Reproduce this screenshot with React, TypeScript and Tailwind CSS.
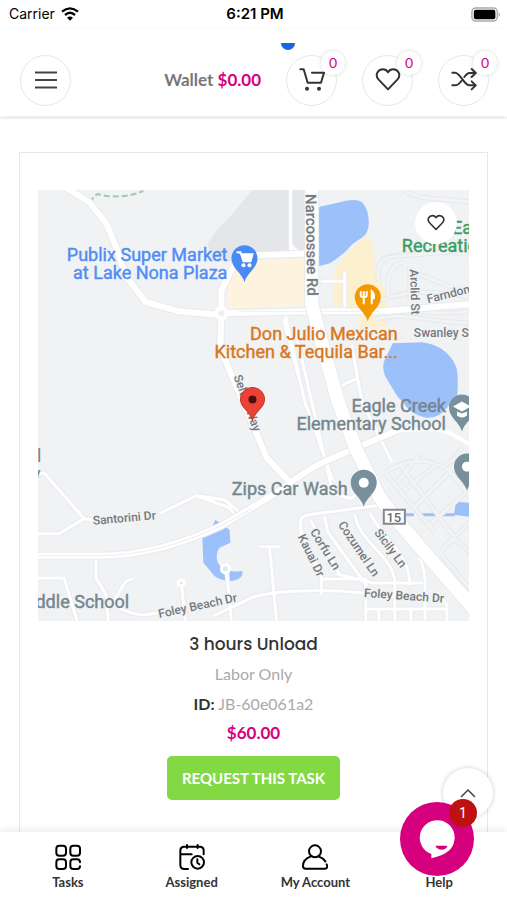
import type { ReactNode } from 'react'

const ACTIONS = [
  {
    nome: 'Cart',
    icon: (
      <>
        <path d="M4 7h10l12 40h40l9-30H39" />
        <circle cx="24" cy="65" r="3" fill="currentColor" />
        <circle cx="60" cy="65" r="3" fill="currentColor" />
      </>
    ),
  },
  {
    nome: 'Wishlist',
    icon: <path d="M39 67 11 38C-2 23 9 7 24 7c8 0 12 4 15 9 3-5 7-9 15-9 15 0 26 16 13 31Z" />,
  },
  {
    nome: 'Compare',
    icon: (
      <>
        <path d="M4 17h8c17 0 26 38 44 38h17M4 55h8c9 0 14-6 19-13M40 30c5-7 9-12 16-12h17" />
        <path d="m62 6 12 12-12 12M62 43l12 12-12 12" />
      </>
    ),
  },
]

const TABS = [
  {
    nome: 'Tasks',
    icon: (
      <>
        <rect x="4" y="5" width="29" height="30" rx="9" />
        <rect x="46" y="5" width="29" height="30" rx="9" />
        <rect x="4" y="46" width="29" height="29" rx="9" />
        <path d="M75 55c0-6-4-9-9-9H55c-6 0-9 4-9 9v11c0 6 4 9 9 9h11c5 0 9-3 9-8" />
      </>
    ),
  },
  {
    nome: 'Assigned',
    icon: (
      <>
        <path d="M27 75H16C8 75 4 71 4 63V20c0-8 4-12 12-12h46c8 0 12 4 12 12v11M24 3v9M56 3v9M5 31h33" />
        <circle cx="56" cy="55" r="19" />
        <path d="M55 46v10l6 5" />
      </>
    ),
  },
  {
    nome: 'My Account',
    icon: (
      <>
        <circle cx="39" cy="22" r="18" />
        <path d="M27 37C12 42 3 54 3 66c0 5 2 8 8 8h58c7 0 8-6 5-13M51 38c9 3 15 8 19 14" />
      </>
    ),
  },
  { nome: 'Help', icon: null },
]

const ROADS = [
  'M-2 343h23l25-15L6 282l-8 3M46 328l8 1M121 323l37-18 33 12 7 10M158 305l28 4 11 9 6 6',
  'M58 365v22l10 17 2 26M-2 387h28l9 30 4 13M95 388c-10 0-12 12-18 20-4 6 8 14 29 16l19-3',
  'M143 392l4 38M188 378l5 52M175 425l38-18c20-8 75-9 110-5l60 6',
  'M221 356h20M231 357l7 73M283 403v-16M283 388h44v42M298 383l36 9h50',
  'M262 352v-22q1-5 8-6l75-10M261 336l22 51M272 330l29 54M286 326l3 15 39 54M316 324c5 28 37 40 40 66v40M331 322c12 25 40 40 40 72M345 314c20 26 40 48 41 75v40',
  'M328 418h80M340 418v12M372 418v12M408 430v-16l-10-13',
  'M256 137l38 165 18 6 8-6M306 121v-40M282 91h26M245 129l16 61M313 155l10 56 30 60M291 200l28-12M246 121l20 90 28 78',
  'M252 0v66M259 62l-8-8',
]

const FAINT_ROADS = [
  'M346 282c22-15 42-15 65-2M362 275l56 75 14 12M346 282l50 60M365 300l34-27M375 317l36-36M358 292l24-29M388 336l38-33M411 281l20 25M403 358l27-26M402 363l29 35M402 363q3-10 14-14M403 277c14-8 16-14 20-20',
  'M330 115c30-14 60-17 100-8M344 130c34-17 54-2 86-9M375 82l50 20M342 70q24-12 88-6M364 0c20 12 38 7 66 12',
  'M340 91c-4-18 4-25 20-25l70-6M350 108c-3-20 2-34 14-36M371 110V75M336 129c30-8 45 2 94 4',
]

const MAIN_ROADS =
  'M-2 365h60c50 0 90-14 125-30l55-33q30-23 50-32l70-30M183 123l-1 34 9 23 27 63 10 24 22 23M28-2l23 14 17 21 10 24 10 30 20 25 33 9 42 4M183 123v-23l10-20 8-14 73-3M183 123l91-2h70l86-7'

const NARCOOSSEE = 'M273-2v115l6 24 20 73 19 50 23 47 20 26 74 85'

const LABELS = [
  { x: 189, y: 71, color: '#4f8df5', text: 'Publix Super Market' },
  { x: 189, y: 89, color: '#4f8df5', text: 'at Lake Nona Plaza' },
  { x: 359, y: 150, color: '#d8781c', text: 'Don Julio Mexican' },
  { x: 359, y: 168, color: '#d8781c', text: 'Kitchen & Tequila Bar...' },
  { x: 407, y: 221, color: '#74868e', text: 'Eagle Creek' },
  { x: 407, y: 239, color: '#74868e', text: 'Elementary School' },
  { x: 309, y: 304, color: '#74868e', text: 'Zips Car Wash' },
  { x: 91, y: 417, color: '#74868e', text: 'ddle School' },
]

const STREETS = [
  { x: 267, y: 4, angle: 89, size: 15, text: 'Narcoossee Rd' },
  { x: 371, y: 79, angle: 88, size: 12, text: 'Arclid St' },
  { x: 389, y: 113, angle: -14, size: 12, text: 'Farndon' },
  { x: 375, y: 147, angle: 0, size: 12, text: 'Swanley St' },
  { x: 55, y: 334, angle: -5, size: 12, text: 'Santorini Dr' },
  { x: 121, y: 427, angle: -12, size: 12, text: 'Foley Beach Dr' },
  { x: 325, y: 406, angle: 4, size: 12, text: 'Foley Beach Dr' },
  { x: 271, y: 341, angle: 58, size: 12, text: 'Corfu Ln' },
  { x: 259, y: 346, angle: 64, size: 12, text: 'Kauai Dr' },
  { x: 299, y: 334, angle: 56, size: 12, text: 'Cozumel Ln' },
  { x: 335, y: 342, angle: 53, size: 12, text: 'Sicily Ln' },
  { x: 195, y: 186, angle: 70, size: 12, text: 'Selten Way' },
]

function Icon({ children, className = 'size-[26px]', width = 6 }: { children: ReactNode; className?: string; width?: number }) {
  return (
    <svg viewBox="0 0 78 78" className={className} fill="none" stroke="currentColor" strokeWidth={width} strokeLinecap="round" strokeLinejoin="round" aria-hidden="true">
      {children}
    </svg>
  )
}

function Pin({ x, y, color, children }: { x: number; y: number; color: string; children?: ReactNode }) {
  return (
    <g transform={`translate(${x} ${y})`}>
      <path d="M0 0C-2-9-13-14-13-24a13 13 0 1 1 26 0C13-14 2-9 0 0Z" fill={color} />
      {children}
    </g>
  )
}

function TaskMap() {
  return (
    <svg viewBox="0 0 430 430" className="block aspect-square w-full" fontFamily="Roboto, sans-serif" role="img" aria-label="Map of the task location">
      <rect width="430" height="430" fill="#f0f2f4" />
      <path d="M214 0 191 27l-13 13-9 14 6 17h25l52-8h21V0Z" fill="#e4e6ea" />
      <path d="M266 68l-60 2-15 15-3 30 3 3 77-3Z" fill="#fef4dd" />
      <path d="M328 45l7 10 1 25 12 23v34h-27l-2-19-25-3 2-35 15-20Z" fill="#fdf0ce" />

      {/* Water */}
      <g fill="#9cc0f9">
        <path d="M280 17l18-4q20-6 26 0 6 7 6 20 0 10-7 15-8 4-15 12-8 8-17 13l-11 3Z" />
        <path d="M354 153l30-1q12 2 19 7 10 7 14 17 3 8 1 33l-8 6q-10 14-24 12-14-3-22-15l-6-7-12-20q-3-10 0-16Z" />
        <path d="M177 329l14 10 1 13-11 5q-4 6-2 14 5 12 25 9 1 9-13 10-10-1-15-5l-11-13-1-24q3-6 9-10Z" />
        <path d="M417 311l14 1v14l-16-2Z" />
        <path d="M367 324h8M380 324h36" stroke="#9cc0f9" strokeWidth="3" />
      </g>
      <path d="M51 12l8-8q24 6 46-3" fill="none" stroke="#9fc9b4" strokeWidth="2" strokeDasharray="6 3" />

      {/* Roads */}
      <g fill="none" strokeLinejoin="round">
        {FAINT_ROADS.map((d) => (
          <g key={d}>
            <path d={d} stroke="#e6e9eb" strokeWidth="5" />
            <path d={d} stroke="#f1f3f5" strokeWidth="3" />
          </g>
        ))}
        {ROADS.map((d) => (
          <path key={d} d={d} stroke="#e9ebee" strokeWidth="5" />
        ))}
        {ROADS.map((d) => (
          <path key={d} d={d} stroke="#fff" strokeWidth="3" />
        ))}
        <path d={MAIN_ROADS} stroke="#e8eaed" strokeWidth="8" />
        <path d={MAIN_ROADS} stroke="#fff" strokeWidth="6" />
        <path d="M358 240l38-2q18 4 36 17" stroke="#fff" strokeWidth="4" />
        <path d="M-2 365h60c50 0 90-14 125-30l30-17M200 121h140" stroke="#eceef0" strokeWidth="1" />
        <path d={NARCOOSSEE} stroke="#e8eaed" strokeWidth="15" />
        <path d={NARCOOSSEE} stroke="#fff" strokeWidth="13" />
        <circle cx="183" cy="123" r="5" fill="#eceef0" stroke="#fff" strokeWidth="4" />
        <circle cx="143" cy="392" r="3" fill="#e5e7ea" stroke="#fff" strokeWidth="3" />
        <circle cx="187" cy="378" r="4" fill="#e5e7ea" stroke="#fff" strokeWidth="3" />
      </g>

      {/* Labels */}
      <g fill="#75797c" stroke="#f0f2f4" strokeWidth="2" paintOrder="stroke" fontWeight="500">
        {STREETS.map((s) => (
          <text key={s.text + s.x} transform={`translate(${s.x} ${s.y}) rotate(${s.angle})`} fontSize={s.size}>
            {s.text}
          </text>
        ))}
      </g>
      <g strokeWidth="0.400">
        {LABELS.map((l) => (
          <text key={l.text} x={l.x} y={l.y} fontSize="18" fill={l.color} stroke={l.color} textAnchor="end">
            {l.text}
          </text>
        ))}
        <g fill="#3a9b63" stroke="#3a9b63" fontSize="18">
          <text x="413" y="44">Eagle</text>
          <text x="363" y="62">Recreation</text>
        </g>
        <g fill="#74868e" fontSize="18">
          <text x="-1" y="271">l</text>
          <text x="-6" y="289">y</text>
        </g>
      </g>

      <rect x="345" y="319" width="21" height="14" fill="#fff" stroke="#85898c" strokeWidth="2" />
      <text x="355" y="331" fontSize="13" fontWeight="500" fill="#666a6d" textAnchor="middle">15</text>

      {/* Pins */}
      <Pin x={206} y={92} color="#4a8af4">
        <path d="M-8-30h4l3 9H6l2-7H-4" fill="#fff" stroke="#fff" strokeWidth="2" />
        <circle cx="-1" cy="-17" r="2" fill="#fff" />
        <circle cx="5" cy="-17" r="2" fill="#fff" />
      </Pin>
      <Pin x={329} y={131} color="#f29900">
        <path d="M-4-17v-13M-7-30v4q0 2 3 2t3-2v-4M4-17v-13q3 3 2 7H4" fill="none" stroke="#fff" strokeWidth="2" />
      </Pin>
      <Pin x={325} y={316} color="#78909c">
        <circle cy="-24" r="5" fill="#fff" />
      </Pin>
      <Pin x={423} y={241} color="#78909c">
        <path d="M-9-25 0-30l9 5-9 5ZM-5-20v4q5 4 10 0v-4L0-18Z" fill="#fff" />
      </Pin>
      <Pin x={428} y={300} color="#78909c">
        <circle cy="-24" r="5" fill="#fff" />
      </Pin>
      <g transform="translate(214 230)">
        <path d="M0 0C-2-10-12-12-12-21a12 12 0 1 1 24 0C12-12 2-10 0 0Z" fill="#ea4335" stroke="#c5372c" />
        <circle cy="-21" r="4" fill="#500b0b" />
      </g>
    </svg>
  )
}

function StatusBar() {
  return (
    <div className="grid h-7 grid-cols-3 items-center pr-[6px] pl-[9px] font-[Inter,sans-serif] text-sm text-black">
      <div className="flex items-center gap-[6px]">
        <span>Carrier</span>
        <svg viewBox="0 0 54 42" className="h-[14px] w-[18px]" fill="none" stroke="currentColor" strokeWidth="7" aria-hidden="true">
          <path d="M3 14q24-20 48 0M12 24q15-13 30 0" />
          <path d="m27 41-9-9q9-7 18 0Z" fill="currentColor" stroke="none" />
        </svg>
      </div>
      <span className="text-center text-[15px] font-semibold">6:21 PM</span>
      <svg viewBox="0 0 32 16" className="h-[15px] w-[30px] justify-self-end" aria-hidden="true">
        <rect x="1" y="1" width="27" height="14" rx="4" fill="#fff" stroke="#aaa" strokeWidth="1.5" />
        <rect x="3" y="3" width="23" height="10" rx="2" />
        <path d="M29.500 5.500q3 2.500 0 5Z" fill="#aaa" />
      </svg>
    </div>
  )
}

export default function App() {
  return (
    <div className="relative flex h-screen flex-col overflow-hidden bg-white font-[Lato,sans-serif] text-[#333]">
      <StatusBar />

      <header className="relative z-10 flex h-[89px] items-center justify-between border-b border-gray-100 pt-4 pr-[18px] pl-5 shadow-sm">
        <button type="button" aria-label="Menu" className="grid size-[51px] place-items-center rounded-full border border-gray-200">
          <svg viewBox="0 0 22 18" className="w-[22px]" stroke="#444" strokeWidth="2" aria-hidden="true">
            <path d="M0 1.500h22M0 9h22M0 16.500h22" />
          </svg>
        </button>
        <div className="flex items-center gap-[25px]">
          <a href="#wallet" className="relative text-[17px] font-bold text-[#777]">
            Wallet <span className="text-[#d6007f]">$0.00</span>
            <span className="absolute -top-6 -right-[34px] h-[7px] w-[14px] rounded-b-full bg-[#1268dc]" />
          </a>
          {ACTIONS.map((a) => (
            <button key={a.nome} type="button" aria-label={a.nome} className="relative grid size-[51px] place-items-center rounded-full border border-gray-200">
              <Icon>{a.icon}</Icon>
              <span className="absolute -top-[5px] -right-[9px] grid size-6 place-items-center rounded-full bg-white text-sm text-[#d6007f] shadow-[0_0_4px_rgba(0,0,0,0.15)]">
                0
              </span>
            </button>
          ))}
        </div>
      </header>

      <main className="min-h-0 flex-1 overflow-hidden px-[19px] pt-[35px]">
        <article className="flex min-h-full flex-col items-center border border-gray-200 px-[18px] pt-[37px] pb-8 text-center">
          <div className="relative w-full">
            <TaskMap />
            <button type="button" aria-label="Add to wishlist" className="absolute top-3 right-3 grid size-[42px] place-items-center rounded-full bg-white">
              <Icon className="size-[18px]" width={7}>{ACTIONS[1].icon}</Icon>
            </button>
          </div>
          <h2 className="mt-[9px] font-[Poppins,Inter,sans-serif] text-[17px] leading-7 font-medium">3 hours Unload</h2>
          <p className="mt-[2px] text-base leading-7 text-[#aaa]">Labor Only</p>
          <p className="mt-[2px] text-base leading-7 text-[#aaa]">
            <b className="text-[#333]">ID:</b> JB-60e061a2
          </p>
          <p className="mt-px text-[17px] leading-7 font-bold text-[#d6007f]">$60.00</p>
          <button type="button" className="mt-[9px] h-11 rounded-[5px] bg-[#82d944] px-[15px] text-[15px] font-bold text-white">
            REQUEST THIS TASK
          </button>
        </article>
      </main>

      <nav className="z-10 grid h-[68px] grid-cols-4 bg-white px-[6px] shadow-[0_0_9px_rgba(0,0,0,0.12)]">
        {TABS.map((t) => (
          <a key={t.nome} href={`#${t.nome}`} className="flex flex-col items-center pt-3 text-[13px] leading-5 font-bold">
            <span className="mb-[2px] size-[26px] text-black">{t.icon && <Icon>{t.icon}</Icon>}</span>
            {t.nome}
          </a>
        ))}
      </nav>

      <button type="button" aria-label="Back to top" className="absolute right-[14px] bottom-[82px] grid size-[50px] place-items-center rounded-full bg-white shadow-[0_0_5px_rgba(0,0,0,0.2)]">
        <svg viewBox="0 0 16 9" className="w-4" fill="none" stroke="#444" strokeWidth="1.500" aria-hidden="true">
          <path d="m1 8 7-7 7 7" />
        </svg>
      </button>
      <button type="button" aria-label="Open chat" className="absolute right-[33px] bottom-6 z-20 size-[74px] rounded-full bg-[#d6007f]">
        <svg viewBox="0 0 222 222" className="size-full" aria-hidden="true">
          <path d="M112 55a52 52 0 0 1 28 96q-10 9-46 18V156A52 52 0 0 1 112 55Z" fill="#fff" />
          <path d="M106 131h36q-3 12-17 12-14-1-19-12Z" fill="#d6007f" />
        </svg>
        <span className="absolute -top-[3px] -right-[3px] grid size-7 place-items-center rounded-full bg-[#be1111] font-[Roboto,sans-serif] text-sm text-white">
          1
        </span>
      </button>
    </div>
  )
}
